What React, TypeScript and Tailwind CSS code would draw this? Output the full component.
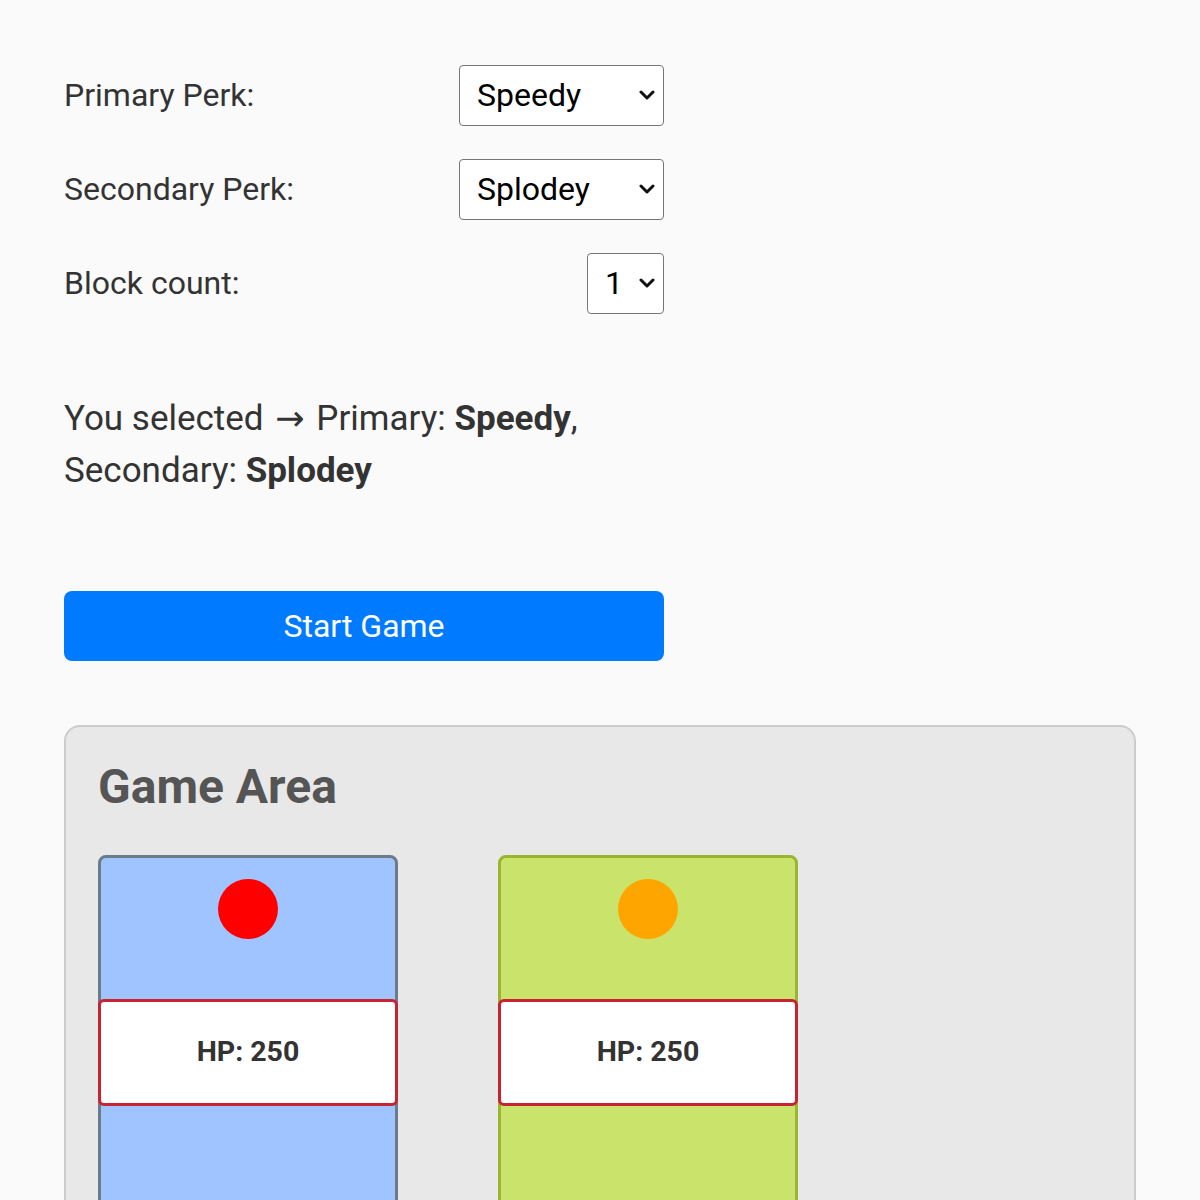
import React, { useState } from "react";

const perks = ["Speedy", "Splodey", "Tanky", "Sneaky"];

const Row = ({ label, children }: { label: string; children: React.ReactNode }) => (
  <div className="flex items-center justify-between h-[60px]">
    <span className="text-[32px] text-[#333]">{label}</span>
    {children}
  </div>
);

const Picker = ({
  value,
  options,
  onChange,
  width,
}: {
  value: string;
  options: string[];
  onChange: (v: string) => void;
  width: string;
}) => (
  <div className={`relative ${width}`}>
    <select
      value={value}
      onChange={(e) => onChange(e.target.value)}
      className="appearance-none w-full h-[61px] bg-white border border-[#767676] rounded-[4px] pl-[17px] pr-8 text-[32px] text-black"
    >
      {options.map((o) => (
        <option key={o}>{o}</option>
      ))}
    </select>
    <svg
      className="absolute right-[9px] top-1/2 -translate-y-1/2 pointer-events-none"
      width="16"
      height="11"
      viewBox="0 0 16 11"
    >
      <path d="M2 2.5 L8 8.5 L14 2.5" fill="none" stroke="#111" strokeWidth="3" strokeLinecap="round" strokeLinejoin="round" />
    </svg>
  </div>
);

const Lane = ({ bg, border, dot }: { bg: string; border: string; dot: string }) => (
  <div className={`w-[300px] h-[500px] rounded-[8px] border-[3px] ${bg} ${border} flex flex-col items-center pt-[21px]`}>
    <div className={`w-[60px] h-[60px] rounded-full ${dot}`}></div>
    <div className="mt-[60px] w-[300px] h-[107px] bg-white border-[3px] border-[#c82333] rounded-[6px] flex items-center justify-center">
      <span className="text-[28.5px] font-bold text-[#333]">HP: 250</span>
    </div>
  </div>
);

export default function App() {
  const [primary, setPrimary] = useState("Speedy");
  const [secondary, setSecondary] = useState("Splodey");
  const [blocks, setBlocks] = useState("1");

  return (
    <div className="min-h-screen bg-[#fafafa] px-16 pt-[65px] pb-10 font-['Roboto',sans-serif] text-[#333]">
      <div className="w-[600px] flex flex-col gap-[34px]">
        <Row label="Primary Perk:">
          <Picker value={primary} options={perks} onChange={setPrimary} width="w-[205px]" />
        </Row>
        <Row label="Secondary Perk:">
          <Picker value={secondary} options={perks} onChange={setSecondary} width="w-[205px]" />
        </Row>
        <Row label="Block count:">
          <Picker value={blocks} options={["1", "2", "3"]} onChange={setBlocks} width="w-[77px]" />
        </Row>
      </div>

      <p className="mt-[79px] w-[600px] text-[35px] leading-[52px] text-[#333]">
        You selected <span className="font-['DejaVu_Sans',sans-serif] mx-[3px]">→</span> Primary: <b>{primary}</b>,
        Secondary: <b>{secondary}</b>
      </p>

      <button className="mt-[94px] w-[600px] h-[70px] bg-[#007bff] text-white text-[32px] rounded-[8px]">
        Start Game
      </button>

      <div className="mt-[64px] w-[1072px] bg-[#e8e8e8] border-2 border-[#cccccc] rounded-[16px] px-[32px] pt-[36px] pb-10">
        <h2 className="text-[48px] font-bold text-[#555] leading-none">Game Area</h2>
        <div className="mt-[44px] flex gap-[100px]">
          <Lane bg="bg-[#a0c4ff]" border="border-[#6c7a89]" dot="bg-[#ff0000]" />
          <Lane bg="bg-[#cae36a]" border="border-[#9ab530]" dot="bg-[#ffa500]" />
        </div>
      </div>
    </div>
  );
}
